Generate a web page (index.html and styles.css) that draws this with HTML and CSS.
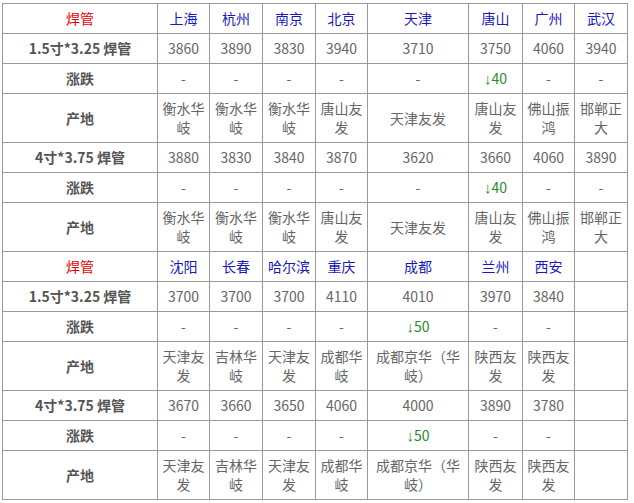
FILE: index.html
```html
<!DOCTYPE html>
<html lang="zh">
<head>
<meta charset="utf-8">
<link rel="stylesheet" href="styles.css">
</head>
<body>
<div class="wrap">
<table class="price">
<colgroup>
<col class="c0"><col class="c1"><col class="c2"><col class="c3"><col class="c4"><col class="c5"><col class="c6"><col class="c7"><col class="c8">
</colgroup>
<tbody>
<tr class="head"><th class="red">焊管</th><td class="city">上海</td><td class="city">杭州</td><td class="city">南京</td><td class="city">北京</td><td class="city">天津</td><td class="city">唐山</td><td class="city">广州</td><td class="city">武汉</td></tr>
<tr><th>1.5寸*3.25 焊管</th><td>3860</td><td>3890</td><td>3830</td><td>3940</td><td>3710</td><td>3750</td><td>4060</td><td>3940</td></tr>
<tr><th>涨跌</th><td>-</td><td>-</td><td>-</td><td>-</td><td>-</td><td class="down"><span class="arrow">↓</span>40</td><td>-</td><td>-</td></tr>
<tr><th>产地</th><td>衡水华岐</td><td>衡水华岐</td><td>衡水华岐</td><td>唐山友发</td><td>天津友发</td><td>唐山友发</td><td>佛山振鸿</td><td>邯郸正大</td></tr>
<tr><th>4寸*3.75 焊管</th><td>3880</td><td>3830</td><td>3840</td><td>3870</td><td>3620</td><td>3660</td><td>4060</td><td>3890</td></tr>
<tr><th>涨跌</th><td>-</td><td>-</td><td>-</td><td>-</td><td>-</td><td class="down"><span class="arrow">↓</span>40</td><td>-</td><td>-</td></tr>
<tr><th>产地</th><td>衡水华岐</td><td>衡水华岐</td><td>衡水华岐</td><td>唐山友发</td><td>天津友发</td><td>唐山友发</td><td>佛山振鸿</td><td>邯郸正大</td></tr>
<tr class="head"><th class="red">焊管</th><td class="city">沈阳</td><td class="city">长春</td><td class="city">哈尔滨</td><td class="city">重庆</td><td class="city">成都</td><td class="city">兰州</td><td class="city">西安</td><td></td></tr>
<tr><th>1.5寸*3.25 焊管</th><td>3700</td><td>3700</td><td>3700</td><td>4110</td><td>4010</td><td>3970</td><td>3840</td><td></td></tr>
<tr><th>涨跌</th><td>-</td><td>-</td><td>-</td><td>-</td><td class="down"><span class="arrow">↓</span>50</td><td>-</td><td>-</td><td></td></tr>
<tr><th>产地</th><td>天津友发</td><td>吉林华岐</td><td>天津友发</td><td>成都华岐</td><td>成都京华（华岐）</td><td>陕西友发</td><td>陕西友发</td><td></td></tr>
<tr><th>4寸*3.75 焊管</th><td>3670</td><td>3660</td><td>3650</td><td>4060</td><td>4000</td><td>3890</td><td>3780</td><td></td></tr>
<tr><th>涨跌</th><td>-</td><td>-</td><td>-</td><td>-</td><td class="down"><span class="arrow">↓</span>50</td><td>-</td><td>-</td><td></td></tr>
<tr><th>产地</th><td>天津友发</td><td>吉林华岐</td><td>天津友发</td><td>成都华岐</td><td>成都京华（华岐）</td><td>陕西友发</td><td>陕西友发</td><td></td></tr>
</tbody>
</table>
</div>
</body>
</html>
```

FILE: styles.css
```css
html, body {
  margin: 0;
  padding: 0;
  background: #ffffff;
}
.wrap {
  padding: 3px 0 0 2px;
}
.price {
  border-collapse: collapse;
  table-layout: fixed;
  width: 626px;
  border: 1px solid #333333;
  font-family: "Noto Sans CJK SC", "Microsoft YaHei", sans-serif;
  font-size: 14px;
  line-height: 19px;
  color: #666666;
}
.c0 { width: 155px; }
.c1 { width: 52px; }
.c2 { width: 53px; }
.c3 { width: 53px; }
.c4 { width: 52px; }
.c5 { width: 101px; }
.c6 { width: 54px; }
.c7 { width: 52px; }
.c8 { width: 53px; }
.price th, .price td {
  border: 1px solid #999999;
  padding: 5px 4px;
  text-align: center;
  vertical-align: middle;
  font-weight: normal;
}
.price th {
  font-weight: bold;
  color: #555555;
}
.price th.red {
  color: #e60000;
  font-weight: normal;
}
.price td.city {
  color: #1a1ab8;
}
.price td.down {
  color: #2a8a2a;
}
.arrow {
  font-family: "Liberation Sans", "DejaVu Sans", sans-serif;
  font-size: 15px;
  line-height: 1;
}
```
